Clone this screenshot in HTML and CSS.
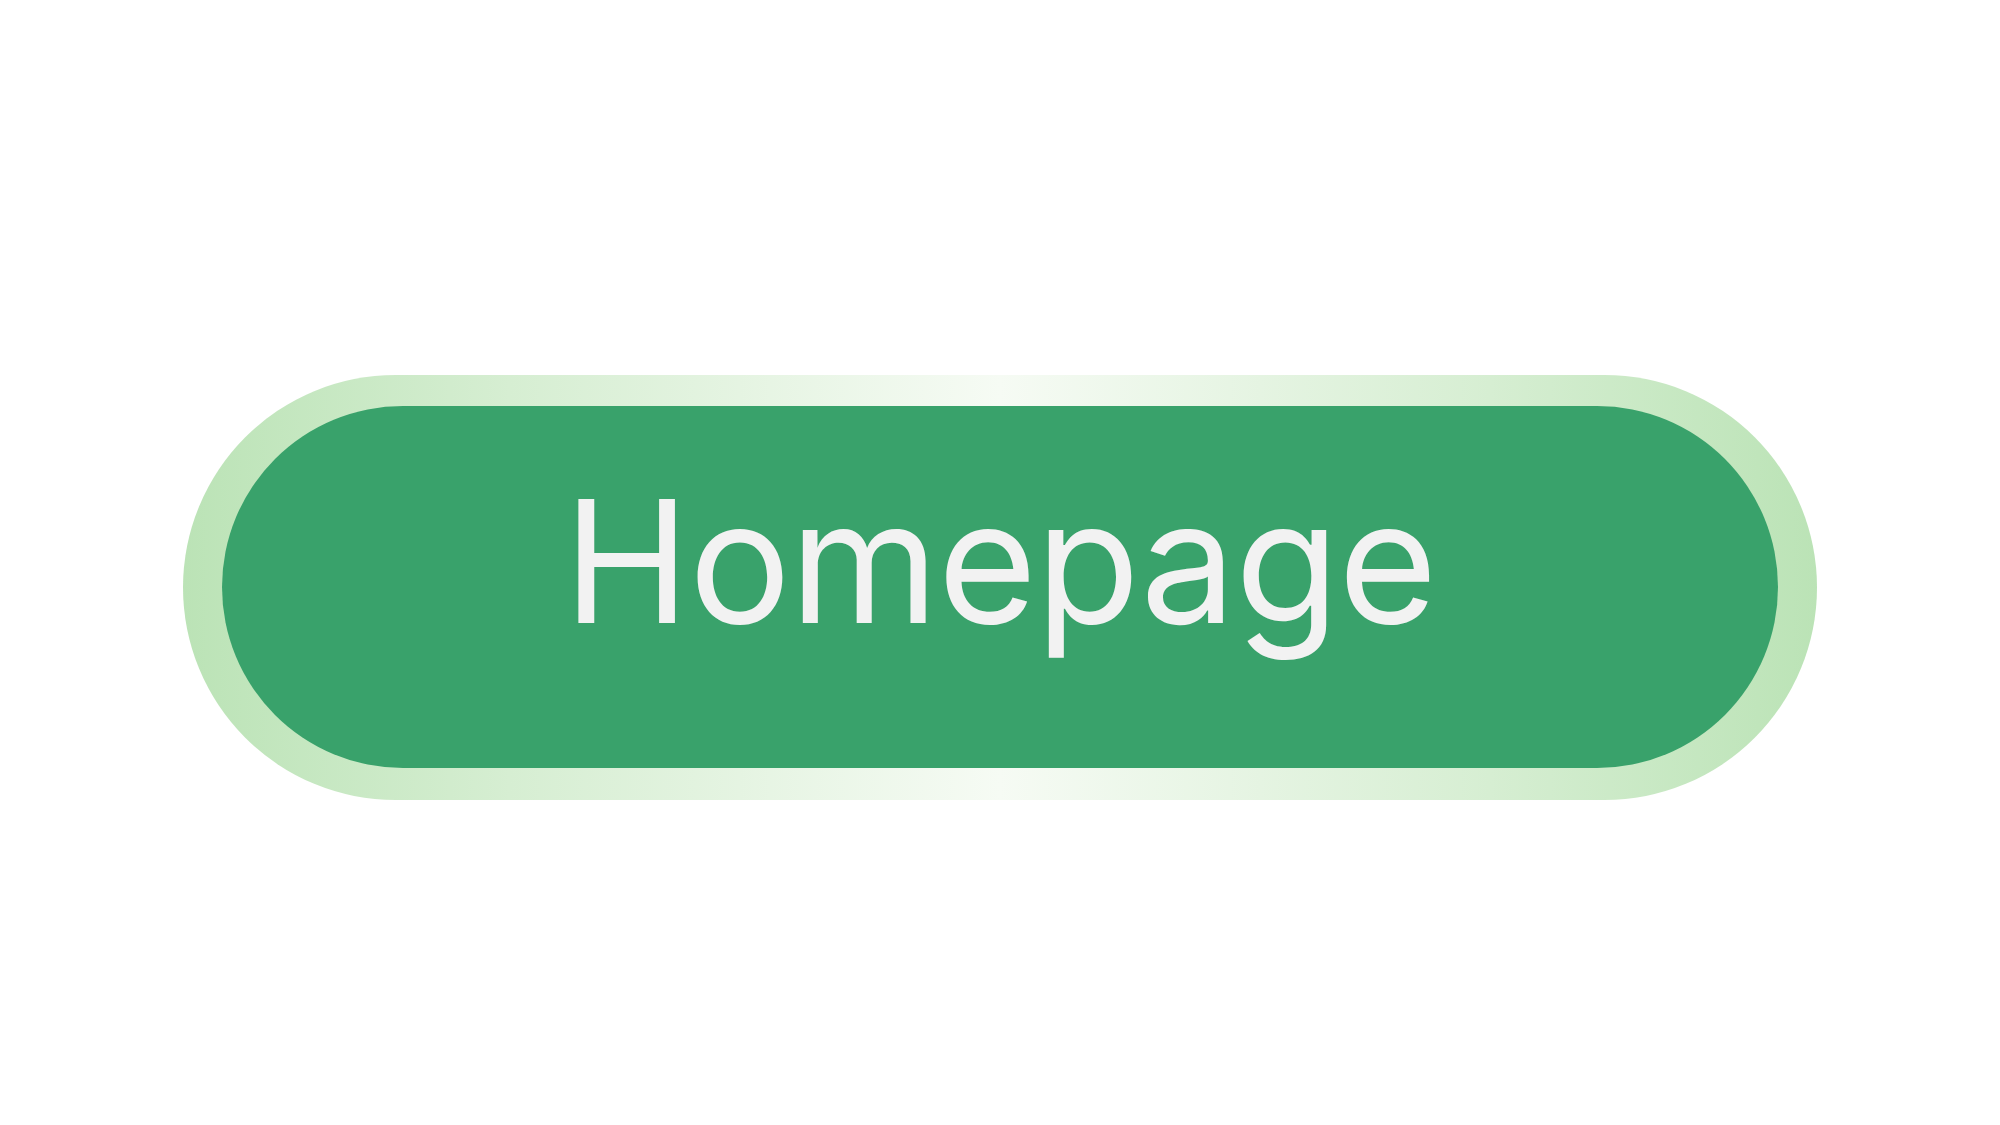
FILE: index.html
```html
<!DOCTYPE html>
<html>
<head>
<meta charset="utf-8">
<link rel="stylesheet" href="styles.css">
</head>
<body>
<main class="stage">
  <div class="ring">
    <button class="btn">Homepage</button>
  </div>
</main>
</body>
</html>
```
FILE: styles.css
```css
html, body {
  margin: 0;
  padding: 0;
  background: #ffffff;
}
.stage {
  width: 2000px;
  height: 1125px;
  box-sizing: border-box;
  padding-top: 375px;
  display: flex;
  justify-content: center;
  align-items: flex-start;
}
.ring {
  width: 1634px;
  height: 425px;
  box-sizing: border-box;
  padding: 31px 39px 32px 39px;
  border-radius: 213px;
  background: linear-gradient(90deg, #bbe3b6 0%, #d6eed2 20%, #f6fbf4 50%, #d6eed2 80%, #bbe3b6 100%);
  display: flex;
}
.btn {
  flex: 1;
  border: none;
  margin: 0;
  border-radius: 182px;
  background: #39a26b;
  color: #f2f2f2;
  font-family: Inter, "Noto Sans", sans-serif;
  font-weight: 400;
  font-size: 170px;
  line-height: 1;
  padding: 0 0 52px 0;
  display: flex;
  align-items: center;
  justify-content: center;
  letter-spacing: -1px;
}
```
